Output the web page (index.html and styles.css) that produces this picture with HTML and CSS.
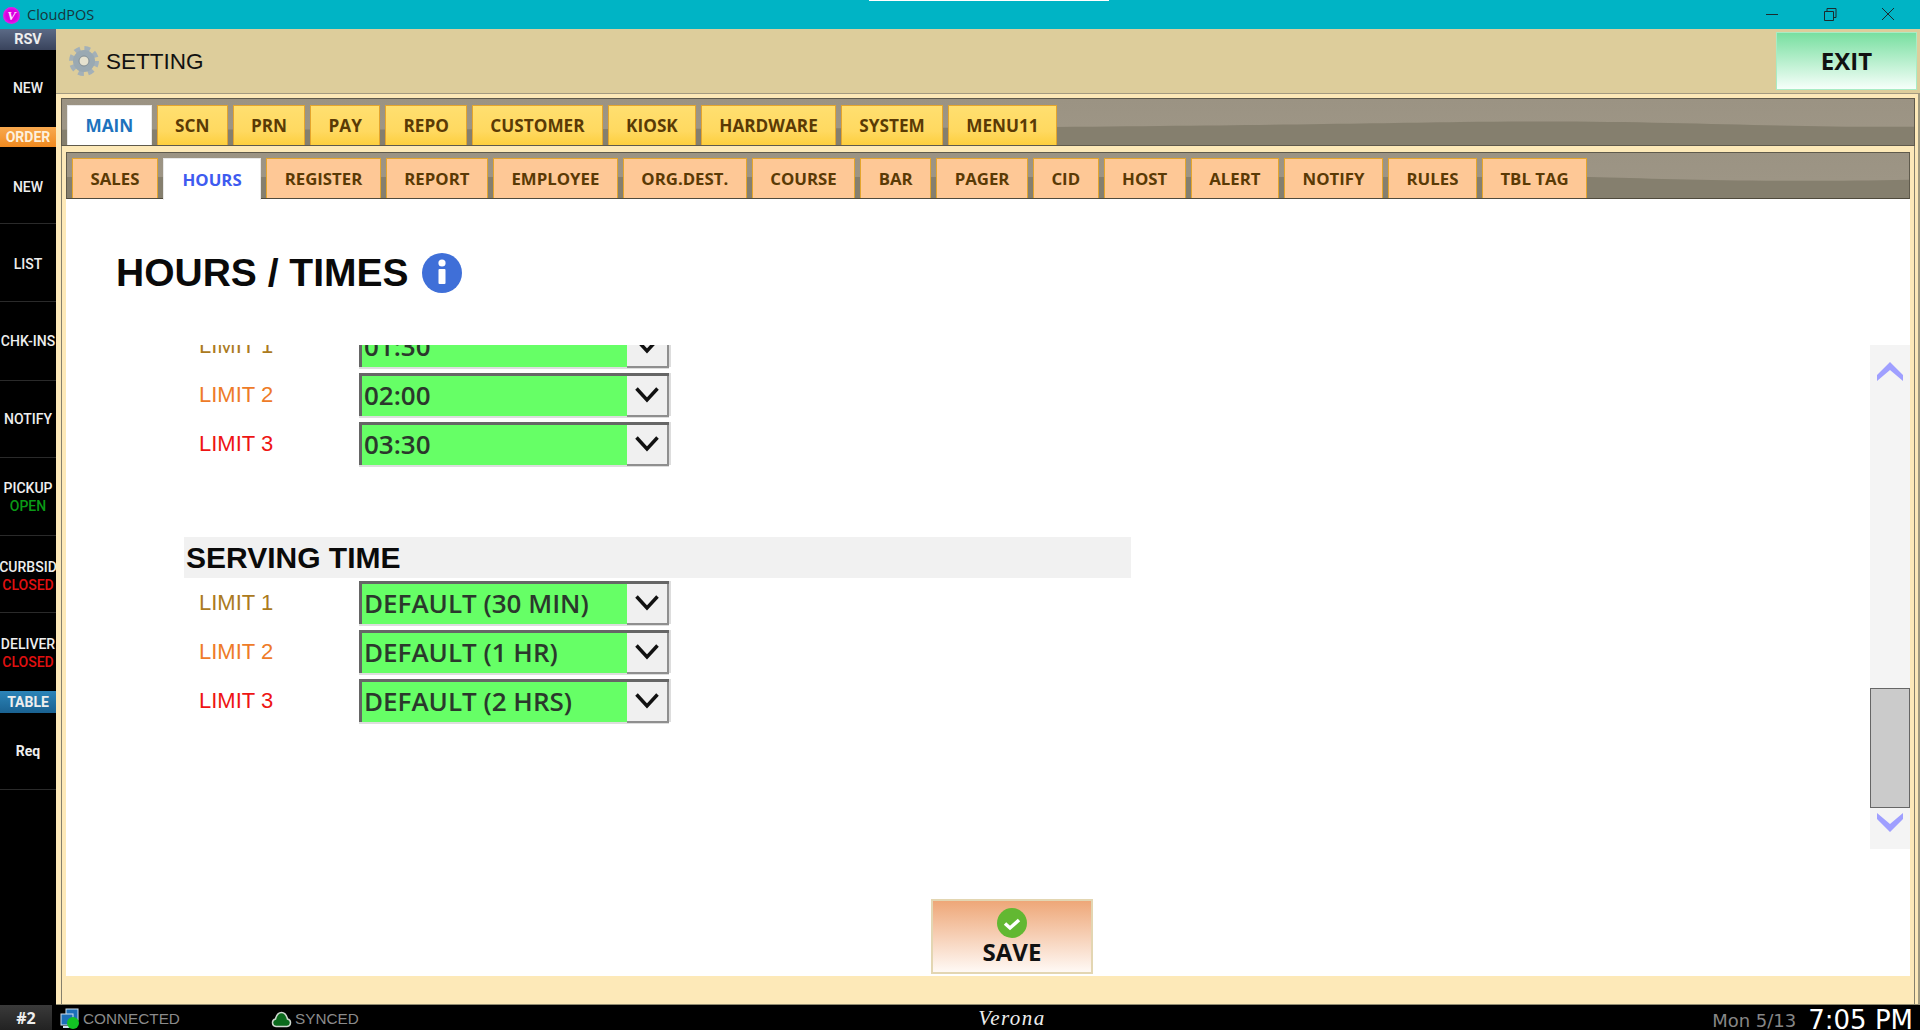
FILE: index.html
```html
<!DOCTYPE html>
<html lang="en">
<head>
  <meta charset="UTF-8" />
  <title>CloudPOS</title>
  <link rel="stylesheet" href="styles.css">
</head>
<body>
  <div class="titlebar">
    <span class="app-logo">V</span>
    <span class="app-name">CloudPOS</span>
    <span class="title-strip"></span>
    <div class="win-btns">
      <svg width="14" height="14" viewBox="0 0 14 14"><path d="M1 7.5h12" stroke="#1c2b2e" fill="none"/></svg>
      <svg width="14" height="14" viewBox="0 0 14 14"><path d="M1.5 4.5h9v9h-9zM4 4.5V1.5h9v9h-2.5" stroke="#1c2b2e" fill="none"/></svg>
      <svg width="14" height="14" viewBox="0 0 14 14"><path d="M1 1l12 12M13 1L1 13" stroke="#1c2b2e" fill="none"/></svg>
    </div>
  </div>

  <div class="middle">
    <aside class="sidebar">
      <div class="side-band rsv">RSV</div>
      <div class="side-item short plain">NEW</div>
      <div class="side-band order">ORDER</div>
      <div class="side-item short lower">NEW</div>
      <div class="side-item lower">LIST</div>
      <div class="side-item tall">CHK-INS</div>
      <div class="side-item short">NOTIFY</div>
      <div class="side-item">PICKUP<span class="open">OPEN</span></div>
      <div class="side-item short lower">CURBSID<span class="closed">CLOSED</span></div>
      <div class="side-item plain lower">DELIVER<span class="closed">CLOSED</span></div>
      <div class="side-band table">TABLE</div>
      <div class="side-item short req">Req</div>
    </aside>

    <main class="main">
      <header class="page-head">
        <svg class="gear" width="30" height="30" viewBox="0 0 30 30">
          <circle cx="15" cy="15" r="12.5" fill="none" stroke="#a3b0b8" stroke-width="5" stroke-dasharray="5.6 4.22"/>
          <circle cx="15" cy="15" r="8" fill="none" stroke="#9aa9b2" stroke-width="6"/>
          <circle cx="15" cy="15" r="5" fill="#e6e2cf"/>
          <circle cx="15" cy="15" r="5" fill="none" stroke="#7f8d96"/>
        </svg>
        <span class="page-name">SETTING</span>
        <button class="exit-btn">EXIT</button>
      </header>

      <div class="panel">
        <nav class="tabs tabs-main">
          <svg class="wave" viewBox="0 0 1854 48" preserveAspectRatio="none"><path d="M0 32C1000 32 1200 27 1400 24S1700 30 1854 29V48H0Z" fill="#857f6e"/></svg>
          <button class="tab yellow on">MAIN</button>
          <button class="tab yellow">SCN</button>
          <button class="tab yellow">PRN</button>
          <button class="tab yellow">PAY</button>
          <button class="tab yellow">REPO</button>
          <button class="tab yellow">CUSTOMER</button>
          <button class="tab yellow">KIOSK</button>
          <button class="tab yellow">HARDWARE</button>
          <button class="tab yellow">SYSTEM</button>
          <button class="tab yellow">MENU11</button>
        </nav>

        <div class="frame">
          <nav class="tabs tabs-sub">
            <svg class="wave" viewBox="0 0 1844 47" preserveAspectRatio="none"><path d="M0 25H1524C1600 27 1700 31 1844 28V47H0Z" fill="#857f6e"/></svg>
            <button class="tab peach">SALES</button>
            <button class="tab peach on">HOURS</button>
            <button class="tab peach">REGISTER</button>
            <button class="tab peach">REPORT</button>
            <button class="tab peach">EMPLOYEE</button>
            <button class="tab peach">ORG.DEST.</button>
            <button class="tab peach">COURSE</button>
            <button class="tab peach">BAR</button>
            <button class="tab peach">PAGER</button>
            <button class="tab peach">CID</button>
            <button class="tab peach">HOST</button>
            <button class="tab peach">ALERT</button>
            <button class="tab peach">NOTIFY</button>
            <button class="tab peach">RULES</button>
            <button class="tab peach">TBL TAG</button>
          </nav>

          <section class="content">
            <div class="content-head">
              <h1>HOURS / TIMES</h1>
              <svg class="info" width="40" height="40" viewBox="0 0 40 40">
                <circle cx="20" cy="20" r="20" fill="#3f6fd8"/>
                <circle cx="20" cy="10" r="3.6" fill="#fff"/>
                <rect x="16.500" y="16" width="7" height="15" rx="1" fill="#fff"/>
              </svg>
            </div>

            <div class="scroll-row">
              <div class="scroll-view">
                <div class="scroll-inner">
                  <div class="limit-row"><span class="limit l1">LIMIT 1</span><div class="pick"><span class="pick-val">01:30</span><span class="pick-btn"><svg width="24" height="16" viewBox="0 0 24 16"><path d="M1.500 1.500l10.500 11.500 10.500-11.500" fill="none" stroke="#111" stroke-width="3.500"/></svg></span></div></div>
                  <div class="limit-row"><span class="limit l2">LIMIT 2</span><div class="pick"><span class="pick-val">02:00</span><span class="pick-btn"><svg width="24" height="16" viewBox="0 0 24 16"><path d="M1.500 1.500l10.500 11.500 10.500-11.500" fill="none" stroke="#111" stroke-width="3.500"/></svg></span></div></div>
                  <div class="limit-row"><span class="limit l3">LIMIT 3</span><div class="pick"><span class="pick-val">03:30</span><span class="pick-btn"><svg width="24" height="16" viewBox="0 0 24 16"><path d="M1.500 1.500l10.500 11.500 10.500-11.500" fill="none" stroke="#111" stroke-width="3.500"/></svg></span></div></div>

                  <h2 class="band">SERVING TIME</h2>
                  <div class="limit-row"><span class="limit l1">LIMIT 1</span><div class="pick"><span class="pick-val">DEFAULT (30 MIN)</span><span class="pick-btn"><svg width="24" height="16" viewBox="0 0 24 16"><path d="M1.500 1.500l10.500 11.500 10.500-11.500" fill="none" stroke="#111" stroke-width="3.500"/></svg></span></div></div>
                  <div class="limit-row"><span class="limit l2">LIMIT 2</span><div class="pick"><span class="pick-val">DEFAULT (1 HR)</span><span class="pick-btn"><svg width="24" height="16" viewBox="0 0 24 16"><path d="M1.500 1.500l10.500 11.500 10.500-11.500" fill="none" stroke="#111" stroke-width="3.500"/></svg></span></div></div>
                  <div class="limit-row"><span class="limit l3">LIMIT 3</span><div class="pick"><span class="pick-val">DEFAULT (2 HRS)</span><span class="pick-btn"><svg width="24" height="16" viewBox="0 0 24 16"><path d="M1.500 1.500l10.500 11.500 10.500-11.500" fill="none" stroke="#111" stroke-width="3.500"/></svg></span></div></div>
                </div>
              </div>
              <div class="scrollbar">
                <svg class="arrow-up" width="26" height="20" viewBox="0 0 26 20"><path d="M0 20V14L13 1l13 13v6L13 9z" fill="#9f9fff"/></svg>
                <div class="thumb"></div>
                <svg class="arrow-down" width="26" height="20" viewBox="0 0 26 20"><path d="M0 0v6l13 13L26 6V0L13 11z" fill="#9f9fff"/></svg>
              </div>
            </div>

            <div class="save-row">
              <button class="save-btn">
                <svg width="30" height="30" viewBox="0 0 30 30">
                  <circle cx="15" cy="15" r="15" fill="#62b832"/>
                  <path d="M8 15.500l5 4.500 9-8" fill="none" stroke="#fff" stroke-width="3.500"/>
                </svg>
                <span>SAVE</span>
              </button>
            </div>
          </section>
        </div>
      </div>
    </main>
  </div>

  <footer class="statusbar">
    <div class="station">#2</div>
    <div class="stat stat-conn">
      <svg width="20" height="22" viewBox="0 0 20 22">
        <rect x="6" y="1" width="12" height="11" fill="#1d6fb8" stroke="#cfe0ee"/>
        <rect x="1" y="6" width="12" height="11" fill="#1d6fb8" stroke="#cfe0ee"/>
        <rect x="3" y="18" width="7" height="2" fill="#cfe0ee"/>
        <circle cx="13" cy="15" r="6" fill="#12c224"/>
      </svg>
      <span>CONNECTED</span>
    </div>
    <div class="stat stat-sync">
      <svg width="21" height="17" viewBox="0 0 21 17"><path d="M5 15.500a3.800 3.800 0 0 1-.5-7.500C5.500 4 8 1.500 10.500 1.500S15.500 4 16.500 8a3.800 3.800 0 0 1-.5 7.500z" fill="#0b6a1c" stroke="#cfd8cf" stroke-width="1.500"/></svg>
      <span>SYNCED</span>
    </div>
    <div class="store">Verona</div>
    <div class="clock"><span class="date">Mon 5/13</span><span class="time">7:05 PM</span></div>
  </footer>
</body>
</html>
```

FILE: styles.css
```css
html, body { margin: 0; padding: 0; height: 1030px; overflow: hidden; background: #000; }
body { display: flex; flex-direction: column; font-family: "Liberation Sans", Arial, sans-serif; }
button { font-family: inherit; cursor: pointer; }

/* window title */
.titlebar { position: relative; height: 29px; flex: none; background: #00b4c5; display: flex; align-items: center; padding-left: 3px; }
.app-logo { width: 17px; height: 17px; margin-top: 1px; border-radius: 50%; background: radial-gradient(#d800e0 45%, #f04cf6); color: #ffe6ff; font: italic bold 13px/17px "Liberation Serif", serif; text-align: center; }
.app-name { margin-left: 7px; font: 14.5px "Open Sans", sans-serif; color: #17343a; }
.title-strip { position: absolute; top: 0; left: 869px; width: 240px; height: 1px; background: #fff; }
.win-btns { margin-left: auto; display: flex; gap: 44px; padding-right: 25px; margin-top: -1px; }

.middle { flex: 1; display: flex; min-height: 0; }

/* left rail */
.sidebar { width: 56px; flex: none; background: #000; display: flex; flex-direction: column; color: #eee; font-family: "Roboto", sans-serif; font-weight: 500; font-size: 14px; text-align: center; }
.side-band { flex: none; height: 21px; line-height: 21px; font-weight: 700; }
.rsv { background: linear-gradient(#5b6a86, #39435c); height: 21px; font-size: 14.5px; }
.order { background: linear-gradient(#f8a94f, #f08a20); height: 20px; line-height: 20px; color: #fdf0dc; }
.table { background: linear-gradient(#2c84b8, #1a6291); height: 22px; line-height: 22px; }
.side-item { flex: none; height: 78px; box-sizing: border-box; border-bottom: 1px solid #2a2a2a; display: flex; flex-direction: column; justify-content: center; align-items: center; white-space: nowrap; overflow: hidden; line-height: 18px; }
.side-item.short { height: 77px; }
.side-item.tall { height: 79px; }
.side-item.plain { border-bottom: 0; padding-bottom: 1px; }
.side-item.lower { padding-top: 3px; }
.open { color: #0a9a16; }
.closed { color: #e01010; }
.req { font-weight: 700; }

.main { flex: 1; display: flex; flex-direction: column; min-width: 0; }

/* page header */
.page-head { height: 64px; flex: none; box-sizing: content-box; background: #ddcd9b; border-bottom: 1px solid #a39a80; display: flex; align-items: center; padding-left: 13px; }
.gear { flex: none; }
.page-name { margin: 1px 0 0 7px; font-size: 22.500px; color: #111; }
.exit-btn { margin-left: auto; margin-right: 3px; width: 141px; height: 58px; border: 1px solid #a8ecc4; background: linear-gradient(#78dfa0, #f6fffa); font: 700 24px "Open Sans", sans-serif; color: #111; padding: 0 0 2px; }

.panel { flex: 1; min-height: 0; display: flex; flex-direction: column; background: #fde9b8; padding: 4px 3px 0 5px; border-right: 2px solid #a09a80; border-bottom: 1px solid #8f8a70; }

/* tab rows */
.tabs { position: relative; flex: none; display: flex; gap: 5px; box-sizing: border-box; border: 1px solid #5f5a4c; background: linear-gradient(#9b9383, #9d9585 60%, #958e7d); }
.wave { position: absolute; left: 0; top: 0; width: 100%; height: 100%; }
.tabs-main { height: 48px; padding: 6px 0 0 5px; }
.tabs-sub { height: 47px; padding: 5px 0 0 5px; border-bottom-color: #4f4a3c; }
.tab { position: relative; height: 100%; box-sizing: border-box; padding: 0 17.500px; border: 1px solid #e4a52d; border-bottom: 0; font: 700 16.800px "Open Sans", sans-serif; color: #5a3a05; white-space: nowrap; }
.yellow { background: linear-gradient(#ffdf70, #ffd960 65%, #fdcf3e); font-size: 17.200px; padding: 0 17.250px; }
.peach { background: #fec896; }
.tab.on { background: #fff; border-color: #e8e8e8; }
.yellow.on { color: #1d72bd; padding: 0 17.500px; }
.peach.on { color: #3e5bf0; height: calc(100% + 2px); padding: 0 18.500px; }

.frame { flex: 1; min-height: 0; display: flex; flex-direction: column; padding: 6px 4px 0; border-left: 1px solid #85806c; border-right: 1px solid #85806c; }

/* white content */
.content { height: 777px; flex: none; background: #fff; display: flex; flex-direction: column; }
.content-head { height: 146px; flex: none; box-sizing: border-box; padding: 54px 0 0 50px; display: flex; align-items: flex-start; gap: 13px; }
.content-head h1 { margin: 0; font-size: 39px; line-height: 40px; color: #0a0a0a; font-weight: 700; }
.info { flex: none; }

.scroll-row { height: 504px; flex: none; display: flex; }
.scroll-view { flex: 1; overflow: hidden; }
.scroll-inner { margin-top: -21px; padding-left: 118px; }
.limit-row { height: 43px; margin-bottom: 6px; display: flex; align-items: center; }
.limit { width: 175px; padding-left: 15px; box-sizing: border-box; font-size: 22px; flex: none; }
.l1 { color: #ab7a20; }
.l2 { color: #ee7b28; }
.l3 { color: #ee1414; }

.pick { width: 310px; height: 43px; box-sizing: border-box; display: flex; background: #66ff66; border: 3px solid #666; border-right: 0; border-bottom: 0; box-shadow: 0 2px 0 #ddd, 2px 0 0 #ddd; }
.pick-val { flex: 1; padding-left: 2px; font: 600 26px/39px "Open Sans", sans-serif; color: #2b382c; white-space: nowrap; }
.pick-btn { width: 42px; box-sizing: border-box; background: #f0f0f0; border-right: 2px solid #8f8f8f; border-bottom: 2px solid #8f8f8f; display: flex; align-items: center; justify-content: center; margin-bottom: -1px; padding-bottom: 1px; }

.band { width: 947px; height: 41px; box-sizing: border-box; margin: 72px 0 3px 0; padding-left: 2px; background: #f1f1f1; font-size: 30px; line-height: 42px; font-weight: 700; color: #0a0a0a; }

/* scrollbar */
.scrollbar { position: relative; width: 40px; height: 504px; flex: none; background: #f4f4f4; }
.arrow-up { position: absolute; top: 16px; left: 7px; }
.arrow-down { position: absolute; top: 468px; left: 7px; }
.thumb { position: absolute; top: 343px; left: 0; width: 40px; height: 120px; box-sizing: border-box; background: #cbcbcb; border: 1px solid #666; }

.save-row { flex: 1; display: flex; justify-content: center; align-items: flex-start; padding-top: 50px; }
.save-btn { margin-left: 48px; width: 162px; height: 75px; box-sizing: border-box; border: 2px solid #e3d6b2; background: linear-gradient(#eea778, #fff9f5); padding: 7px 0 0; display: flex; flex-direction: column; align-items: center; font: 700 24px/26px "Open Sans", sans-serif; color: #111; }
.save-btn span { margin-top: 1px; }

/* bottom status */
.statusbar { height: 25px; flex: none; background: #000; display: flex; align-items: center; position: relative; }
.station { width: 52px; height: 100%; background: linear-gradient(#3a3a3a, #222); color: #eee; font: 700 16px/27px "Open Sans", sans-serif; text-align: center; }
.stat { display: flex; align-items: center; gap: 3px; color: #8b8b8b; font-size: 15.300px; padding-top: 3px; }
.stat-conn { margin-left: 8px; width: 211px; }
.store { position: absolute; left: 976px; width: 72px; top: 1px; text-align: center; font: italic 21px "Liberation Serif", serif; letter-spacing: 1.500px; color: #eee; }
.clock { margin-left: auto; height: 25px; box-sizing: border-box; padding: 3px 7px 0 0; display: flex; align-items: flex-start; gap: 12px; font-family: "DejaVu Sans", sans-serif; line-height: 24px; }
.date { margin-top: 1px; font-size: 18px; color: #868686; }
.time { font-size: 26px; color: #fff; }
```
